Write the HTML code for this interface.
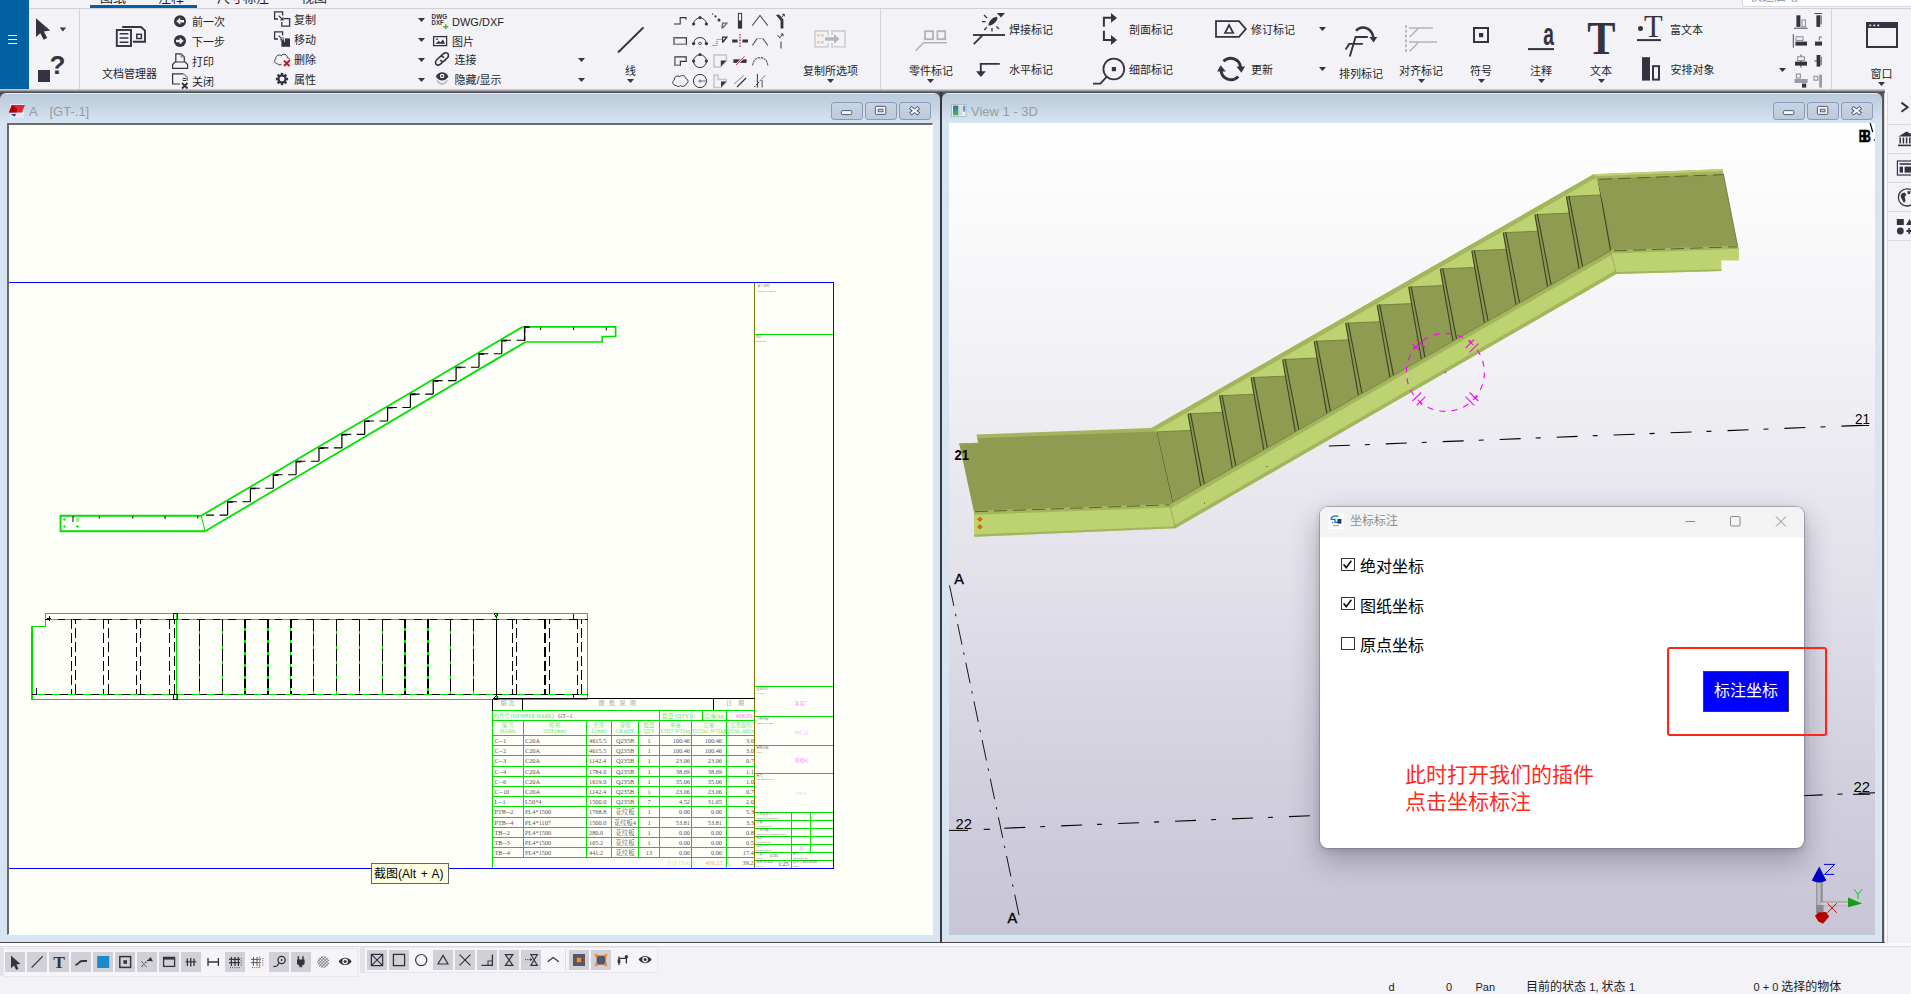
<!DOCTYPE html>
<html lang="zh-CN">
<head>
<meta charset="utf-8">
<title>Tekla Structures - 坐标标注</title>
<style>
*{box-sizing:border-box;margin:0;padding:0}
html,body{width:1911px;height:994px;overflow:hidden;background:#f3f2f7;}
body{position:relative;font-family:"Liberation Sans","Noto Sans CJK SC",sans-serif;font-size:11px;color:#1e1e28;}
.abs{position:absolute}
.t{position:absolute;white-space:nowrap;line-height:1}
svg{position:absolute;overflow:visible}
#ribbon{position:absolute;left:0;top:0;width:1911px;height:90px;background:#f3f2f7}
#bluebar{position:absolute;left:0;top:0;width:29px;height:90px;background:#0060a0}
.rsep{position:absolute;top:9px;width:1px;height:80px;background:#d4d3da}
.rt{position:absolute;white-space:nowrap;font-size:11px;line-height:12px;color:#1e1e28;letter-spacing:0}
.win{position:absolute;top:93px;height:849px;background:linear-gradient(#e4ecf6 0px,#e4ecf6 1px,#bccbdb 1.5px,#c6d5e4 14px,#d7e5f3 30px,#d7e5f3 100%);border-radius:6px 6px 0 0}
.wtitle{position:absolute;top:12px;font-size:13px;line-height:14px;color:#9a9aa0;white-space:pre}
.wbtn{position:absolute;top:9px;width:32px;height:18px;border:1px solid #8a9ab8;border-radius:3px;background:linear-gradient(#c6d4e3,#bccbdc)}
</style>
</head>
<body>
<div id="ribbon"></div>
<div id="bluebar"></div>
<!-- shadow under ribbon -->
<div class="abs" style="left:0;top:89px;width:1885px;height:4px;background:linear-gradient(#dcdce0,#a8a8ac 35%,#4a4a4e 80%,#4a4a4e)"></div>
<div class="abs" style="left:0;top:92px;width:1884px;height:10px;background:#505054"></div>
<!-- left window -->
<div class="win" id="winL" style="left:0;width:940px">
  <div class="wtitle" style="left:29px">A</div><div class="wtitle" style="left:49.5px">[GT-.1]</div>
  <div class="wbtn" style="left:831px"></div><div class="wbtn" style="left:865px"></div><div class="wbtn" style="left:899px"></div>
  <div class="abs" style="left:7px;top:30px;width:926px;height:812px;background:#fffffa;border-left:2px solid #6a6a68;border-top:2px solid #6a6a68;border-right:1px solid #fff;border-bottom:1px solid #fff"></div>
</div>
<div class="abs" style="left:940px;top:92px;width:2px;height:850px;background:#38383a"></div>
<!-- right window -->
<div class="win" id="winR" style="left:942px;width:940px">
  <div class="wtitle" style="left:29px">View 1 - 3D</div>
  <div class="wbtn" style="left:831px"></div><div class="wbtn" style="left:865px"></div><div class="wbtn" style="left:899px"></div>
  <div class="abs" id="view3d" style="left:7px;top:30px;width:926px;height:812px;background:linear-gradient(#ffffff 0%,#f4f4f7 25%,#e3e1ea 55%,#d2d0dd 80%,#c8c6d6 100%)"></div>
</div>
<div class="abs" style="left:1882px;top:93px;width:3px;height:850px;background:linear-gradient(90deg,#58585c 0,#58585c 50%,#c8c8cc 75%,#f8f8fa 100%)"></div>
<!-- right sidebar -->
<div class="abs" style="left:1885px;top:90px;width:26px;height:855px;background:#f3f2f7;border-left:2px solid #fbfbfd"></div><div class="abs" style="left:1887px;top:93px;width:1px;height:850px;background:#dad9e0"></div>
<!-- bottom -->
<div class="abs" style="left:0;top:941.6px;width:1885px;height:1.6px;background:#47474b"></div>
<div class="abs" style="left:0;top:944px;width:1911px;height:50px;background:#f3f2f7"></div>
<svg style="left:0;top:88px" width="1911" height="170" viewBox="0 88 1911 170" fill="none">
<rect x="10" y="104" width="14" height="14" fill="#e6e8f2"/><path d="M11.8 105.1H24.9L22.1 112.6H9Z" fill="#d62a34"/><path d="M11.8 105.1L17 108.6L16.6 112.6H9Z" fill="#b00008"/><path d="M10.8 113.9H16.1L14.6 116.7Z" fill="#0a4a9a"/>
<defs><linearGradient id="ti" x1="0" x2="0" y1="0" y2="1"><stop offset="0" stop-color="#2a7a9a"/><stop offset="1" stop-color="#5ab060"/></linearGradient></defs>
<rect x="951.6" y="104.4" width="14.4" height="12.2" fill="#eceef2" stroke="#aab4c4" stroke-width="0.8"/><rect x="953" y="105.6" width="5.4" height="9.8" fill="url(#ti)"/><rect x="959" y="105.6" width="3.4" height="9.8" fill="#d8dade"/><rect x="963" y="105.6" width="2.2" height="6" fill="#5a9ad0"/>
<rect x="841.4" y="110.6" width="10.4" height="4" rx="1" fill="#f4f4f6" stroke="#4a4a58" stroke-width="0.9"/>
<rect x="875.4" y="106.4" width="10.4" height="8" rx="1" fill="#f4f4f6" stroke="#4a4a58" stroke-width="0.9"/><rect x="878.2" y="109.2" width="4.8" height="2.6" fill="#c2d0e0" stroke="#4a4a58" stroke-width="0.8"/>
<path d="M910.3000000000001 107.4L918.9 114.0M918.9 107.4L910.3000000000001 114.0" stroke="#4a4a58" stroke-width="3.8"/><path d="M910.9 107.85000000000001L918.3000000000001 113.55M918.3000000000001 107.85000000000001L910.9 113.55" stroke="#f4f4f6" stroke-width="2.1"/>
<rect x="1783.4" y="110.6" width="10.4" height="4" rx="1" fill="#f4f4f6" stroke="#4a4a58" stroke-width="0.9"/>
<rect x="1817.4" y="106.4" width="10.4" height="8" rx="1" fill="#f4f4f6" stroke="#4a4a58" stroke-width="0.9"/><rect x="1820.2" y="109.2" width="4.8" height="2.6" fill="#c2d0e0" stroke="#4a4a58" stroke-width="0.8"/>
<path d="M1852.3 107.4L1860.8999999999999 114.0M1860.8999999999999 107.4L1852.3 114.0" stroke="#4a4a58" stroke-width="3.8"/><path d="M1852.8999999999999 107.85000000000001L1860.3 113.55M1860.3 107.85000000000001L1852.8999999999999 113.55" stroke="#f4f4f6" stroke-width="2.1"/>
<path d="M1901.4 102.6L1907.6 107.2L1901.4 111.8" stroke="#34333f" stroke-width="2"/>
<path d="M1888 124.5H1911" stroke="#dcdbe2" stroke-width="1"/>
<path d="M1888 153.5H1911" stroke="#dcdbe2" stroke-width="1"/>
<path d="M1888 182.5H1911" stroke="#dcdbe2" stroke-width="1"/>
<path d="M1888 211.5H1911" stroke="#dcdbe2" stroke-width="1"/>
<path d="M1888 240.5H1911" stroke="#dcdbe2" stroke-width="1"/>
<path d="M1898.4 136.4L1906.6 131.4L1914.8 136.4Z" fill="#34333f"/><path d="M1900.2 137.6V143.6M1903.4 137.6V143.6M1906.6 137.6V143.6M1909.8 137.6V143.6" stroke="#34333f" stroke-width="1.5"/><path d="M1898 145.4H1915" stroke="#34333f" stroke-width="1.6"/>
<rect x="1897.4" y="161" width="20" height="14" stroke="#34333f" stroke-width="1.2"/><path d="M1899.6 164H1915" stroke="#34333f" stroke-width="1.6"/><rect x="1899.6" y="166.6" width="3.4" height="6" fill="#34333f"/><rect x="1904.6" y="166.6" width="9" height="6" fill="#34333f"/>
<circle cx="1907" cy="197.4" r="8.6" stroke="#34333f" stroke-width="1.3"/><path d="M1901.6 193.6L1904.6 192.4L1906.4 194.6L1904.6 197L1905.6 200.4L1904 203L1902 199.6L1900.6 196.4Z" fill="#34333f"/><path d="M1907.6 191L1910.8 191.6L1909.6 194.2L1907.4 193.4Z" fill="#34333f"/>
<rect x="1896.8" y="219" width="7" height="6" fill="#34333f"/><path d="M1906 225L1909.6 219L1913 225Z" fill="#34333f"/><circle cx="1900.3" cy="231" r="3.4" fill="#34333f"/><path d="M1906.4 231H1912M1909.2 228V234" stroke="#34333f" stroke-width="1.8"/>
</svg>
<div id="ribboncontent">
<div class="abs" style="left:29px;top:8px;width:1882px;height:1px;background:#d0cfd6"></div>
<div class="abs" style="left:90px;top:5px;width:107px;height:3px;background:#0060a0"></div>
<div class="rt" style="left:100px;top:-9.4px;font-size:13px;line-height:14px">图纸</div>
<div class="rt" style="left:158px;top:-9.4px;font-size:13px;line-height:14px">注释</div>
<div class="rt" style="left:217px;top:-9.4px;font-size:13px;line-height:14px">尺寸标注</div>
<div class="rt" style="left:301px;top:-9.4px;font-size:13px;line-height:14px">视图</div>
<div class="abs" style="left:1742px;top:-12px;width:175px;height:19px;background:#fff;border:1px solid #dcdbe2"></div>
<div class="rt" style="left:1750px;top:-9px;color:#8a90b0;font-size:12px">快速启动</div>
<div class="rsep" style="left:79px"></div>
<div class="rsep" style="left:880px"></div>
<div class="rsep" style="left:1831px"></div>
<div class="rt" style="left:192px;top:15.5px;">前一次</div>
<div class="rt" style="left:192px;top:35.5px;">下一步</div>
<div class="rt" style="left:192px;top:56px;">打印</div>
<div class="rt" style="left:192px;top:76.3px;">关闭</div>
<div class="rt" style="left:102px;top:67.7px;">文档管理器</div>
<div class="rt" style="left:294px;top:14px;">复制</div>
<div class="rt" style="left:294px;top:34.2px;">移动</div>
<div class="rt" style="left:294px;top:54.3px;">删除</div>
<div class="rt" style="left:294px;top:74.4px;">属性</div>
<div class="rt" style="left:452px;top:15.8px;">DWG/DXF</div>
<div class="rt" style="left:452px;top:35.9px;">图片</div>
<div class="rt" style="left:454.5px;top:54.3px;">连接</div>
<div class="rt" style="left:454.5px;top:73.7px;">隐藏/显示</div>
<svg style="left:418.0px;top:18.0px" width="7" height="4" viewBox="0 0 7 4"><path d="M0 0H7L3.5 4Z" fill="#33323f"/></svg>
<svg style="left:418.0px;top:38.0px" width="7" height="4" viewBox="0 0 7 4"><path d="M0 0H7L3.5 4Z" fill="#33323f"/></svg>
<svg style="left:418.0px;top:58.0px" width="7" height="4" viewBox="0 0 7 4"><path d="M0 0H7L3.5 4Z" fill="#33323f"/></svg>
<svg style="left:418.0px;top:78.0px" width="7" height="4" viewBox="0 0 7 4"><path d="M0 0H7L3.5 4Z" fill="#33323f"/></svg>
<svg style="left:578.2px;top:57.6px" width="7" height="4" viewBox="0 0 7 4"><path d="M0 0H7L3.5 4Z" fill="#33323f"/></svg>
<svg style="left:578.2px;top:77.7px" width="7" height="4" viewBox="0 0 7 4"><path d="M0 0H7L3.5 4Z" fill="#33323f"/></svg>
<div class="rt" style="left:625px;top:65px;">线</div>
<svg style="left:627.0px;top:78.5px" width="7" height="4" viewBox="0 0 7 4"><path d="M0 0H7L3.5 4Z" fill="#33323f"/></svg>
<div class="rt" style="left:803px;top:65px;">复制所选项</div>
<svg style="left:827.0px;top:78.5px" width="7" height="4" viewBox="0 0 7 4"><path d="M0 0H7L3.5 4Z" fill="#33323f"/></svg>
<div class="rt" style="left:909px;top:65px;">零件标记</div>
<svg style="left:927.0px;top:78.5px" width="7" height="4" viewBox="0 0 7 4"><path d="M0 0H7L3.5 4Z" fill="#33323f"/></svg>
<div class="rt" style="left:1009px;top:24.1px;">焊接标记</div>
<div class="rt" style="left:1009px;top:64.3px;">水平标记</div>
<div class="rt" style="left:1129px;top:24.1px;">剖面标记</div>
<div class="rt" style="left:1129px;top:64.3px;">细部标记</div>
<div class="rt" style="left:1251px;top:23.8px;">修订标记</div>
<div class="rt" style="left:1251px;top:64px;">更新</div>
<svg style="left:1319.3px;top:27.4px" width="7" height="4" viewBox="0 0 7 4"><path d="M0 0H7L3.5 4Z" fill="#33323f"/></svg>
<svg style="left:1319.3px;top:67.2px" width="7" height="4" viewBox="0 0 7 4"><path d="M0 0H7L3.5 4Z" fill="#33323f"/></svg>
<div class="rt" style="left:1339px;top:67.7px;">排列标记</div>
<div class="rt" style="left:1399px;top:64.7px;">对齐标记</div>
<svg style="left:1417.5px;top:78.5px" width="7" height="4" viewBox="0 0 7 4"><path d="M0 0H7L3.5 4Z" fill="#33323f"/></svg>
<div class="rt" style="left:1470px;top:64.7px;">符号</div>
<svg style="left:1477.5px;top:78.5px" width="7" height="4" viewBox="0 0 7 4"><path d="M0 0H7L3.5 4Z" fill="#33323f"/></svg>
<div class="rt" style="left:1530px;top:64.7px;">注释</div>
<svg style="left:1537.5px;top:78.5px" width="7" height="4" viewBox="0 0 7 4"><path d="M0 0H7L3.5 4Z" fill="#33323f"/></svg>
<div class="rt" style="left:1590px;top:64.7px;">文本</div>
<svg style="left:1597.5px;top:78.5px" width="7" height="4" viewBox="0 0 7 4"><path d="M0 0H7L3.5 4Z" fill="#33323f"/></svg>
<div class="rt" style="left:1670px;top:23.8px;">富文本</div>
<div class="rt" style="left:1670.5px;top:64px;">安排对象</div>
<svg style="left:1778.7px;top:67.5px" width="7" height="4" viewBox="0 0 7 4"><path d="M0 0H7L3.5 4Z" fill="#33323f"/></svg>
<div class="rt" style="left:1870.5px;top:67.7px;">窗口</div>
<svg style="left:1878.0px;top:81.5px" width="7" height="4" viewBox="0 0 7 4"><path d="M0 0H7L3.5 4Z" fill="#33323f"/></svg>
</div>
<svg id="ribicons" style="left:0;top:0" width="1911" height="92" viewBox="0 0 1911 92" fill="none" stroke="none">
<g stroke="#fff" stroke-width="1.1"><path d="M8 35.5H17M8 39.5H17M8 43.5H17"/></g>
<path d="M36 18.3V37L40.3 33.2L43.6 39.8L47.2 38L43.9 31.6L50.2 30.6Z" fill="#34333f"/>
<path d="M59.7 27.6H66.1L62.9 31.4Z" fill="#34333f"/>
<text x="49.5" y="73.5" font-family="Liberation Sans,sans-serif" font-weight="bold" font-size="26" fill="#34333f">?</text>
<rect x="38" y="70" width="12" height="12" fill="#34333f"/>
<g stroke="#34333f" stroke-width="1.9"><rect x="116.8" y="30" width="14.2" height="16"/><path d="M122.2 27H141L145 30.6V41.7H133" /><path d="M119.6 33.8H128.4M119.6 38H128.4M119.6 42.2H128.4" stroke-width="1.5"/><rect x="136.8" y="34.3" width="4.6" height="4.2" stroke-width="1.5"/></g>
<circle cx="180" cy="21.2" r="6" fill="#34333f"/><path d="M176.3 21.2L180.3 17.6V20H184V22.4H180.3V24.8Z" fill="#f3f2f7"/>
<circle cx="180" cy="41" r="6" fill="#34333f"/><path d="M183.7 41L179.7 37.4V39.8H176V42.2H179.7V44.6Z" fill="#f3f2f7"/>
<g stroke="#34333f" stroke-width="1.2"><path d="M175.8 62V53.8H181L184.3 57V62"/><path d="M181 53.8V57H184.3" stroke="#8a8a94"/><path d="M172.6 68.3V64.5L175 62H185.2L187.6 64.5V68.3Z"/></g>
<g stroke="#34333f" stroke-width="1.2"><path d="M183.5 73.8H172.6V84H180" /><path d="M183.5 73.8L187.4 77.6V81" stroke="#8a8a94"/><path d="M182 83L187.5 88.5M187.5 83L182 88.5" stroke-width="1.8"/><rect x="183.3" y="78.5" width="2.6" height="2" stroke-width="1"/></g>
<g stroke="#34333f" stroke-width="1.3"><path d="M282.6 15.5V11.8H274.6V19H278"/><path d="M284 18.7H289.6V26.2H281.8V22"/><path d="M278.6 15.6L283 20M283 17.2V20H280.2" stroke-width="1.1"/></g>
<g stroke="#34333f" stroke-width="1.3"><path d="M282.6 35.5V31.8H274.6V39H278"/><path d="M278.6 35.6L283 40M283 37.2V40H280.2" stroke-width="1.1"/></g><rect x="281.4" y="38.4" width="8.6" height="8.4" fill="#34333f"/><path d="M281.4 38.4H285V42H281.4Z" fill="#f3f2f7"/><path d="M280.9 38.8L283.6 41.5M283.6 39.2V41.5H281.3" stroke="#34333f" stroke-width="1.1"/>
<path d="M277.5 63.8C274.5 63.5 273.6 60 276 58.6C275.6 55.5 279.3 54 281.2 55.8C283.3 53 287.6 54.5 287.3 57.6C290 58 290.6 61 288.6 62" stroke="#34333f" stroke-width="1"/><path d="M277.5 63.8C279 65.5 281 65 281.6 64" stroke="#34333f" stroke-width="1"/>
<path d="M284 60.6L289.4 66M289.4 60.6L284 66" stroke="#b01c24" stroke-width="2"/>
<rect x="280.75" y="72.9" width="2.5" height="3.2" transform="rotate(0 282 79)" fill="#34333f"/><rect x="280.75" y="72.9" width="2.5" height="3.2" transform="rotate(45 282 79)" fill="#34333f"/><rect x="280.75" y="72.9" width="2.5" height="3.2" transform="rotate(90 282 79)" fill="#34333f"/><rect x="280.75" y="72.9" width="2.5" height="3.2" transform="rotate(135 282 79)" fill="#34333f"/><rect x="280.75" y="72.9" width="2.5" height="3.2" transform="rotate(180 282 79)" fill="#34333f"/><rect x="280.75" y="72.9" width="2.5" height="3.2" transform="rotate(225 282 79)" fill="#34333f"/><rect x="280.75" y="72.9" width="2.5" height="3.2" transform="rotate(270 282 79)" fill="#34333f"/><rect x="280.75" y="72.9" width="2.5" height="3.2" transform="rotate(315 282 79)" fill="#34333f"/><circle cx="282" cy="79" r="3.55" stroke="#34333f" stroke-width="2.1"/>
<g font-family="Liberation Sans,sans-serif" font-weight="bold" font-size="7.6" fill="#34333f"><text x="431.6" y="18.6" textLength="15.6" lengthAdjust="spacingAndGlyphs">DWG</text><text x="431.6" y="25" textLength="12" lengthAdjust="spacingAndGlyphs">DXF</text></g>
<path d="M445.7 24.3V29.3M443.2 26.8H448.2" stroke="#5aa832" stroke-width="1.5"/>
<rect x="433.6" y="36.6" width="13" height="9" stroke="#34333f" stroke-width="1.3"/><path d="M435.6 43.8L438.6 40.8L440.4 42.4L443 39.4L445 43.8Z" fill="#34333f"/><circle cx="437" cy="39.2" r="0.9" fill="#34333f"/>
<g stroke="#34333f" stroke-width="1.6" stroke-linecap="round"><path d="M440.8 56.3L443.2 53.9C445 52.1 447.8 52.3 448.4 54.6C448.8 56 448.2 57 447.4 57.8L444.6 60.6C443.2 62 441.4 61.6 440.6 60.6"/><path d="M443.2 61.5L440.8 63.9C439 65.7 436.2 65.5 435.6 63.2C435.2 61.8 435.8 60.8 436.6 60L439.4 57.2C440.8 55.8 442.6 56.2 443.4 57.2"/></g>
<path d="M435.8 76.4C439 71 445.2 71 448.4 76.4C445.2 81.8 439 81.8 435.8 76.4Z" fill="#34333f"/><circle cx="442.1" cy="76" r="2.3" fill="#f3f2f7"/><circle cx="442.1" cy="76" r="1" fill="#34333f"/>
<path d="M436.2 80.6C439.5 86.3 444.7 86.3 448 80.6L446.6 80C444 84 440.2 84 437.6 80Z" fill="#b8b8c0"/>
<path d="M618 52.5L643.5 27.4" stroke="#34333f" stroke-width="2"/>
<g stroke="#34333f" stroke-width="1.1"><path d="M674 24H680.2V17.6H686V19.8"/><path d="M674 24H680.2" stroke="#8a8a94"/></g>
<path d="M693.5 23.8C694.5 16 705.5 16 706.5 23.8" stroke="#34333f" stroke-width="1"/><g fill="#34333f"><circle cx="693.6" cy="24" r="1.6"/><circle cx="700" cy="17.6" r="1.5"/><circle cx="706.4" cy="24" r="1.6"/></g>
<g fill="#34333f"><circle cx="712.8" cy="14" r="0.7"/><circle cx="715.5" cy="16.4" r="1.1"/><circle cx="719" cy="20" r="1.5"/></g><path d="M722 22.6H728.2L723.2 28.6H721.2Z" fill="#6a6a76"/><path d="M723.2 23.8H725.4L723.2 26.4Z" fill="#f3f2f7"/>
<rect x="738.4" y="13.4" width="3.2" height="7.6" stroke="#34333f" stroke-width="1"/><rect x="737.9" y="21" width="4.2" height="7.6" fill="#34333f"/>
<path d="M752.3 25.7L760 15.4L767.8 25.7" stroke="#55545f" stroke-width="1.1"/>
<path d="M776 15L780.6 20.5V28.6H783.4V19.4L779 14.4Z" fill="#34333f"/><path d="M781.6 17.4L784 14.6M782.2 14.3H784.3V16.4" stroke="#34333f" stroke-width="1"/>
<rect x="674" y="37.8" width="12.4" height="6.6" stroke="#34333f" stroke-width="1.2"/><path d="M674 37.8V44.4H686.4" stroke="#8a8a94" stroke-width="1.2"/>
<path d="M693.5 43.2C695 35.6 705 35.6 706.5 43.2" stroke="#34333f" stroke-width="1"/><g fill="#34333f"><circle cx="693.6" cy="43.6" r="1.6"/><circle cx="706.4" cy="43.6" r="1.6"/></g><ellipse cx="700" cy="43.4" rx="1.5" ry="1.1" stroke="#34333f" stroke-width="0.8"/>
<g stroke="#8a8a94" stroke-width="0.8"><path d="M712 45.4H717.6M715.6 43.4H718M716 41.4H718M716.4 39.4H722"/></g><path d="M722 36.6H728.2L723.4 42.8H722Z" fill="#34333f"/><path d="M723.2 37.8H725.4L723.2 40.6Z" fill="#f3f2f7"/>
<path d="M732.2 40.9H737.6M742.4 40.9H748" stroke="#34333f" stroke-width="3"/><path d="M740 34V48" stroke="#d04848" stroke-width="1.5" stroke-dasharray="1.6 1.2"/>
<path d="M752.3 45.5L757 38.6" stroke="#55545f" stroke-width="1.1"/><path d="M763 38.6L767.8 45.5" stroke="#55545f" stroke-width="1.1"/><path d="M757 38.6H763" stroke="#a8a8b0" stroke-width="1.1"/>
<path d="M781 41.5V48.6" stroke="#7a7a84" stroke-width="1.6"/><path d="M777.4 35L780.6 38.4" stroke="#34333f" stroke-width="1"/><path d="M780 37.4L782.6 34.4M780.8 34H783V36.2" stroke="#34333f" stroke-width="1"/>
<path d="M674.8 56.8H686.2V61.4H680.4V65.4H674.8Z" stroke="#34333f" stroke-width="1.2"/><path d="M674.8 56.8V65.4H680.4" stroke="#8a8a94" stroke-width="1.2"/>
<circle cx="700" cy="61.2" r="6.4" stroke="#34333f" stroke-width="1"/><g fill="#34333f"><circle cx="700" cy="54.6" r="1.5"/><circle cx="693.6" cy="61" r="1.6"/><circle cx="706.4" cy="61" r="1.6"/></g>
<path d="M714 55H726.4V61L720.6 67H714Z" stroke="#c4c4cc" stroke-width="1.5"/><path d="M726.4 60.6H720.8V66.6Z" fill="#34333f"/>
<path d="M733.4 59.3H746.6V62.9H733.4Z" fill="#34333f"/><path d="M736 65.2L744.4 56.4" stroke="#f3f2f7" stroke-width="2.2"/><path d="M736 65.2L744.4 56.4" stroke="#c02830" stroke-width="1"/>
<path d="M752.6 65.4C753.6 55 766.8 55 767.8 65.4" stroke="#55545f" stroke-width="1.1" stroke-dasharray="2.4 0.7"/>
<path d="M676.4 85.6C672.6 85.6 671.4 81.6 674.4 80C673.8 76.6 677.6 75 679.8 76.6C682 74.6 685.6 75.6 685.6 78.4C688.6 79 688.8 83 686 84C685.4 86.6 681.6 87 680.4 85.6C679.4 86.8 677.2 86.8 676.4 85.6Z" stroke="#34333f" stroke-width="1"/>
<circle cx="700" cy="81" r="6.6" stroke="#34333f" stroke-width="1"/><circle cx="700" cy="81" r="1.6" fill="#8a8a94"/><path d="M700 81H706.6" stroke="#8a8a94" stroke-width="1.2"/>
<path d="M714 75H718V79.6H726.4V82L721 87.6H714Z" stroke="#c4c4cc" stroke-width="1.5"/><path d="M726.4 81.4H721V87.2Z" fill="#34333f"/>
<path d="M734 84L744 75.4" stroke="#8a8a94" stroke-width="1"/><path d="M737 87L746 78" stroke="#34333f" stroke-width="1.2"/>
<path d="M757.4 74V87.6" stroke="#34333f" stroke-width="1"/><path d="M762.2 80V87.6" stroke="#8a8a94" stroke-width="1.6"/><path d="M754.4 87L765 75.4" stroke="#34333f" stroke-width="1" stroke-dasharray="1.6 1.2"/>
<g stroke="#d2d2d8" stroke-width="1.8"><path d="M828 35V31H815V46.8H828V43"/><path d="M832 35V31H845V46.8H832V43"/></g><g fill="#f6c795"><rect x="817.2" y="34" width="2.6" height="2.6"/><rect x="821" y="34" width="2.6" height="2.6"/><rect x="817.2" y="41" width="2.6" height="2.6"/><rect x="821" y="41" width="2.6" height="2.6"/></g><path d="M825 37.2H834V34L839.4 39L834 44V40.8H825Z" fill="#b6b6be"/>
<g stroke="#b2b2ba"><rect x="925" y="31.2" width="8" height="8" stroke-width="1.8"/><rect x="937.4" y="31.2" width="7.8" height="8" stroke-width="1.8"/><path d="M915.8 50.6L923.6 42.8H947" stroke-width="1.5"/></g>
<g stroke="#34333f"><path d="M973 35H1005" stroke-width="1.9"/><path d="M973.8 44.2L982.4 35.4" stroke-width="1.9"/><path d="M992 28V31.6M984 15L987 18M982 21.6H985.6M984.2 30L986.8 27.2M996.4 26.4L999 29" stroke-width="1.3"/></g><path d="M988.4 25.6C988.4 22 992 17.4 996.4 16.8C997.6 17.2 997.6 18.6 997.2 19.6C995.6 23 992 25.8 988.4 25.6Z" fill="#34333f"/><path d="M996.8 13H1005L1001 17.6Z" fill="#34333f"/>
<path d="M999.8 63.9H980.8V72" stroke="#34333f" stroke-width="1.9"/><path d="M976 71.2H985.8L980.9 76.9Z" fill="#34333f"/>
<g stroke="#34333f" stroke-width="2"><path d="M1103.9 26.8V17.8H1111.4"/><path d="M1103.9 30.8V40H1111.4"/></g><path d="M1111 13V22.8L1117 17.9Z" fill="#34333f"/><path d="M1111 35.1V44.9L1117 40Z" fill="#34333f"/>
<circle cx="1113.8" cy="69" r="10.4" stroke="#34333f" stroke-width="1.8"/><rect x="1111.8" y="67" width="4.2" height="4.2" fill="#34333f"/><path d="M1106.8 76.6L1100.4 83.7H1093" stroke="#34333f" stroke-width="1.8"/>
<path d="M1216 21.2H1239L1245.8 29L1239 36.8H1216Z" stroke="#34333f" stroke-width="1.8"/><path d="M1229.1 25L1225 33H1233.2Z" stroke="#34333f" stroke-width="1.7"/>
<g stroke="#34333f" stroke-width="2.9"><path d="M1223.5 61.3A10 10 0 0 1 1240.6 67.6"/><path d="M1238.3 76.6A10 10 0 0 1 1221.1 70.3"/></g><path d="M1236.4 66.6H1245L1241.4 72.8Z" fill="#34333f"/><path d="M1217.2 71.4H1225.8L1220.6 65.2Z" fill="#34333f"/>
<path d="M1356 30.8C1360 25.6 1370.6 25.6 1373.4 37" stroke="#34333f" stroke-width="2.5"/><path d="M1369.4 37H1377.3L1373.6 42.4Z" fill="#34333f"/><g stroke="#34333f" stroke-width="1.9"><path d="M1367.8 37H1355.6L1349.8 56.5"/><path d="M1362.8 43.9H1349.2L1345.6 49.6"/></g>
<g stroke="#b4b4bc"><path d="M1406 25V52.8" stroke-width="1.8" stroke-dasharray="3 1.8"/><path d="M1409 28H1433M1418.8 28L1409.6 37" stroke-width="1.5"/><path d="M1409 42H1437M1418.8 42L1409.6 51.4" stroke-width="1.5"/></g>
<rect x="1474" y="28" width="14" height="14" stroke="#34333f" stroke-width="2"/><rect x="1479" y="33" width="4.2" height="4.2" fill="#34333f"/>
<text transform="translate(1543.2 44.7) scale(0.6 1)" font-family="Liberation Sans,sans-serif" font-weight="bold" font-size="32" fill="#34333f">a</text><rect x="1528" y="48.1" width="26" height="2" fill="#34333f"/>
<text transform="translate(1587.2 54) scale(0.93 1)" font-family="Liberation Serif,serif" font-weight="bold" font-size="45.5" fill="#34333f">T</text>
<text x="1644" y="37.4" font-family="Liberation Serif,serif" font-size="30.5" fill="#34333f">T</text><circle cx="1640.5" cy="28.5" r="2.5" fill="#34333f"/><rect x="1637" y="39.1" width="24" height="2" fill="#34333f"/>
<rect x="1642" y="57.2" width="8" height="23.4" fill="#34333f"/><rect x="1653" y="66.2" width="6" height="13.4" stroke="#34333f" stroke-width="2"/>
<rect x="1796.4" y="15.3" width="4" height="11.6" fill="#34333f"/><rect x="1802" y="20" width="3.4" height="6.6" stroke="#8a8a94" stroke-width="1"/><path d="M1794 28.2H1807.6" stroke="#34333f" stroke-width="0.9"/>
<path d="M1814.4 13.5H1822" stroke="#34333f" stroke-width="0.9"/><rect x="1816.4" y="15.3" width="3.8" height="11.6" fill="#34333f"/><rect x="1820.2" y="15.3" width="1.8" height="9" fill="#8a8a94"/>
<path d="M1793.3 34.2V47.7" stroke="#34333f" stroke-width="0.9"/><rect x="1796" y="36.8" width="7" height="3.6" stroke="#8a8a94" stroke-width="1"/><rect x="1795.4" y="41.6" width="11.6" height="4" fill="#34333f"/>
<rect x="1815" y="41.6" width="7" height="4" fill="#34333f"/><path d="M1822 37H1819.4V40.4" stroke="#6a6a74" stroke-width="1"/>
<path d="M1801 54.5V67.6" stroke="#34333f" stroke-width="0.9"/><rect x="1797.6" y="56.8" width="6.8" height="3.6" stroke="#8a8a94" stroke-width="1" fill="#f3f2f7"/><rect x="1795" y="61.6" width="12" height="4" fill="#34333f"/>
<rect x="1816.6" y="55" width="3.8" height="11.6" fill="#34333f"/><path d="M1814.4 61H1822" stroke="#34333f" stroke-width="0.9"/><rect x="1820.4" y="57" width="1.6" height="8" fill="#8a8a94"/>
<rect x="1796.4" y="74" width="4" height="4" stroke="#9a9aa2" stroke-width="1.2"/><rect x="1794.6" y="79" width="13" height="4" fill="#9a9aa2"/><rect x="1802" y="83.6" width="4.2" height="4" fill="#34333f"/>
<rect x="1814" y="76.4" width="3.8" height="3.8" stroke="#9a9aa2" stroke-width="1.2"/><rect x="1819.2" y="74.6" width="2.8" height="13" fill="#9a9aa2"/>
<rect x="1867" y="23" width="30" height="24" stroke="#34333f" stroke-width="2"/><rect x="1867" y="23" width="30" height="5" fill="#34333f"/><g fill="#f3f2f7"><rect x="1869.4" y="24.6" width="1.8" height="1.6"/><rect x="1873.4" y="24.6" width="1.8" height="1.6"/><rect x="1877.4" y="24.6" width="1.8" height="1.6"/></g>
</svg>
<svg id="drawing" style="left:0;top:0" width="940" height="940" viewBox="0 0 940 940" fill="none" shape-rendering="auto">
<defs><clipPath id="cvL"><rect x="9" y="125" width="923" height="809"/></clipPath><clipPath id="tbl"><rect x="492" y="698" width="262" height="171"/></clipPath></defs><g clip-path="url(#cvL)">
<path d="M9 282.5H833.5V868.5H9" stroke="#0000ff" stroke-width="1.2" shape-rendering="crispEdges"/>
<path d="M754.5 283V868" stroke="#807000" stroke-width="1.2" shape-rendering="crispEdges"/>
<g stroke="#00e000" stroke-width="1.3" stroke-linejoin="miter">
<path d="M201.3 515.7H60.5V531.2H205.1" stroke-width="1.9"/>
<path d="M205.1 531.2L201.3 515.7" stroke-width="1"/>
<path d="M201.3 515.7L522.6 326.9" stroke-width="1.8"/>
<path d="M205.1 531.2L525.5 342" stroke-width="1.8"/>
<path d="M522.6 326.9H615.6V336.5H602.2V342H525.5" stroke-width="1.7"/>
</g>
<path d="M227.6 515.1V501.7M250.4 501.7V488.2M273.3 488.2V474.8M296.1 474.8V461.3M319.0 461.3V447.9M341.9 447.9V434.4M364.7 434.4V421.0M387.6 421.0V407.5M410.4 407.5V394.1M433.2 394.1V380.6M456.1 380.6V367.2M479.0 367.2V353.7M501.8 353.7V340.3M524.6 340.2V326.8" stroke="#000" stroke-width="1.2"/>
<path d="M227.6 515.1H201.3M250.4 501.7H227.6M273.3 488.2H250.4M296.1 474.8H273.3M319.0 461.3H296.1M341.9 447.9H319.0M364.7 434.4H341.9M387.6 421.0H364.7M410.4 407.5H387.6M433.2 394.1H410.4M456.1 380.6H433.2M479.0 367.2H456.1M501.8 353.7H479.0M524.6 340.2H501.8" stroke="#000" stroke-width="1.1" stroke-dasharray="8 5.5"/>
<path d="M227.2 502.0h5.5M250.0 488.5h5.5M272.9 475.1h5.5M295.8 461.6h5.5M318.6 448.2h5.5M341.5 434.7h5.5M364.3 421.3h5.5M387.2 407.8h5.5M410.0 394.4h5.5M432.9 380.9h5.5M455.7 367.5h5.5M478.6 354.0h5.5M501.4 340.6h5.5M524.2 327.1h5.5" stroke="#000" stroke-width="1.6"/>
<path d="M524.6 328V341" stroke="#000" stroke-width="1.4" stroke-dasharray="5 3"/>
<path d="M73 516v6M99.3 516v2.5M132.8 516v2.5M165 516v3M197.8 516v2.5M540.6 327.5v2.5M573.6 327.5v2.5M606.3 327.5v3" stroke="#000" stroke-width="1"/>
<path d="M62.8 519.6h3M64.3 518v3M62.8 526.4h3M64.3 525v3M76 519h3M76 521h3M77.5 525v3M76 526.5h3" stroke="#00e000" stroke-width="0.8"/>
<g stroke="#00e000" stroke-width="1.2" shape-rendering="crispEdges">
<path d="M587.6 613.3H45.2V626.5H32.1V699.4H587.6Z"/>
<path d="M176.5 613.3V699.4M496.3 613.3V699.4"/>
<path d="M45.2 619.2H587.6M32.1 694.2H587.6" stroke-width="1"/>
<path d="M199.3 619.2V694.2M222.2 619.2V694.2M245.0 619.2V694.2M267.9 619.2V694.2M290.7 619.2V694.2M313.6 619.2V694.2M336.5 619.2V694.2M359.3 619.2V694.2M382.2 619.2V694.2M405.0 619.2V694.2M427.9 619.2V694.2M450.8 619.2V694.2M473.6 619.2V694.2" stroke-width="1.2"/>
</g>
<g stroke="#000" stroke-width="1.1" shape-rendering="crispEdges">
<path d="M45.2 619.2H587.6M32.1 694.2H587.6" stroke-dasharray="7.5 8" stroke-dashoffset="3"/>
<path d="M199.3 619.2V694.2M222.2 619.2V694.2M313.6 619.2V694.2M336.5 619.2V694.2M359.3 619.2V694.2M382.2 619.2V694.2M450.8 619.2V694.2M473.6 619.2V694.2" stroke-dasharray="12 3" stroke-width="1.2"/>
<path d="M245.0 619.2V694.2M267.9 619.2V694.2M290.7 619.2V694.2M405.0 619.2V694.2M427.9 619.2V694.2" stroke-dasharray="9 3" stroke-width="1.9"/>
<path d="M71.5 619.2V694.2M103.6 619.2V694.2M136.6 619.2V694.2M169.8 619.2V694.2M512.3 619.2V694.2M545.0 619.2V694.2M577.7 619.2V694.2" stroke-dasharray="10 4" stroke-width="1.1"/>
<path d="M75.9 619.2V694.2M108.5 619.2V694.2M140.6 619.2V694.2M174.2 619.2V694.2M516.4 619.2V694.2M549.4 619.2V694.2M581.8 619.2V694.2" stroke-dasharray="10 4" stroke-dashoffset="5" stroke-width="1.1"/>
<path d="M496.3 619.2V694.2" stroke-width="1.2"/>
<path d="M173.2 613.8h4.4v5.6h-4.4zM173.2 694.6h4.4v4.8h-4.4zM573.6 613.6v5.6M573.6 694.4v5M494.2 613.6h4.2l-2.1 4zM494.2 699l2.1-4l2.1 4zM49 616v5M47 618.6h4M36.4 688v6" stroke-width="0.9"/>
</g>
<g stroke="#00e000" stroke-width="1.1" shape-rendering="crispEdges">
<path d="M755 334.5H833M755 686.5H833M755 716.5H833M755 745.5H833M755 773.5H833M755 812.5H833M755 820.5H833M755 828.5H833M755 836.5H833M755 844.5H833M755 852.5H833M755 860.5H833"/>
<path d="M791.6 812.3V868M810.3 812.3V852.4"/>
</g>
<path d="M492.5 698.6H754.5M492.5 698.6V710.6M522.6 698.6V710.6M713.6 698.6V710.6" stroke="#000" stroke-width="1.2" shape-rendering="crispEdges"/>
<g stroke="#00e000" stroke-width="1.15" shape-rendering="crispEdges">
<path d="M492.5 710.6H754.5M492.5 720.4H754.5M492.5 735.5H754.5M492.5 745.5H754.5M492.5 755.5H754.5M492.5 766.5H754.5M492.5 776.5H754.5M492.5 786.5H754.5M492.5 796.5H754.5M492.5 806.5H754.5M492.5 817.5H754.5M492.5 827.5H754.5M492.5 837.5H754.5M492.5 847.5H754.5M492.5 857.5H754.5"/>
<path d="M492.5 710.6V868M659.4 710.6V857.7M702.5 710.6V720.4M726.5 710.6V868M691.4 720.4V868M523.1 720.4V857.7M586.4 720.4V857.7M611.8 720.4V857.7M638.4 720.4V857.7"/>
</g>
<g font-family="Liberation Serif,Noto Serif CJK SC,serif"><g clip-path="url(#tbl)">
<text x="507.5" y="705.3" font-size="6" fill="#555" text-anchor="middle" opacity="0.7" >版 次</text>
<text x="618" y="705.3" font-size="6" fill="#555" text-anchor="middle" opacity="0.7" letter-spacing="1.5">图 纸 说 明</text>
<text x="735" y="705.3" font-size="6" fill="#555" text-anchor="middle" opacity="0.7" >日　期</text>
<text x="494" y="717.6" font-size="5.8" fill="#2fdc2f" text-anchor="start" opacity="0.8" textLength="61" lengthAdjust="spacingAndGlyphs">构件号 (MEMBER MARK):</text>
<text x="558" y="717.6" font-size="6" fill="#444" text-anchor="start" opacity="0.85" >GT--1</text>
<text x="662" y="717.6" font-size="5.8" fill="#2fdc2f" text-anchor="start" opacity="0.8" >数量 (QTY)1:</text>
<text x="704.5" y="717.6" font-size="5.8" fill="#2fdc2f" text-anchor="start" opacity="0.8" >总重(kg</text>
<text x="752" y="717.6" font-size="6" fill="#ff40ff" text-anchor="end" opacity="0.8" >406.25</text>
<text x="507.8" y="726.8" font-size="5.4" fill="#2fdc2f" text-anchor="middle" opacity="0.75" >编 号</text>
<text x="507.8" y="733.4" font-size="5.4" fill="#2fdc2f" text-anchor="middle" opacity="0.75" >MARK</text>
<text x="554.7" y="726.8" font-size="5.4" fill="#2fdc2f" text-anchor="middle" opacity="0.75" >规 格</text>
<text x="554.7" y="733.4" font-size="5.4" fill="#2fdc2f" text-anchor="middle" opacity="0.75" >SIZE(mm)</text>
<text x="599" y="726.8" font-size="5.4" fill="#2fdc2f" text-anchor="middle" opacity="0.75" >长度</text>
<text x="599" y="733.4" font-size="5.4" fill="#2fdc2f" text-anchor="middle" opacity="0.75" >L(mm)</text>
<text x="625" y="726.8" font-size="5.4" fill="#2fdc2f" text-anchor="middle" opacity="0.75" >等级</text>
<text x="625" y="733.4" font-size="5.4" fill="#2fdc2f" text-anchor="middle" opacity="0.75" >GRADE</text>
<text x="649" y="726.8" font-size="5.4" fill="#2fdc2f" text-anchor="middle" opacity="0.75" >数量</text>
<text x="649" y="733.4" font-size="5.4" fill="#2fdc2f" text-anchor="middle" opacity="0.75" >QTY</text>
<text x="675.5" y="726.8" font-size="5.4" fill="#2fdc2f" text-anchor="middle" opacity="0.75" >单重</text>
<text x="675.5" y="733.4" font-size="5.4" fill="#2fdc2f" text-anchor="middle" opacity="0.75" >UNIT WT(kg</text>
<text x="709" y="726.8" font-size="5.4" fill="#2fdc2f" text-anchor="middle" opacity="0.75" >总重</text>
<text x="709" y="733.4" font-size="5.4" fill="#2fdc2f" text-anchor="middle" opacity="0.75" >TOTAL WT(kg</text>
<text x="741" y="726.8" font-size="5.4" fill="#2fdc2f" text-anchor="middle" opacity="0.75" >总表面积</text>
<text x="741" y="733.4" font-size="5.4" fill="#2fdc2f" text-anchor="middle" opacity="0.75" >TOTAL AR(m  )</text>
<text x="494.5" y="742.8" font-size="6.3" fill="#333" text-anchor="start" opacity="0.85" >C--1</text>
<text x="525" y="742.8" font-size="6.3" fill="#333" text-anchor="start" opacity="0.85" >C20A</text>
<text x="589" y="742.8" font-size="6.3" fill="#333" text-anchor="start" opacity="0.85" >4615.5</text>
<text x="625" y="742.8" font-size="6.3" fill="#333" text-anchor="middle" opacity="0.85" >Q235B</text>
<text x="649" y="742.8" font-size="6.3" fill="#333" text-anchor="middle" opacity="0.85" >1</text>
<text x="690" y="742.8" font-size="6.3" fill="#333" text-anchor="end" opacity="0.85" >100.46</text>
<text x="722" y="742.8" font-size="6.3" fill="#333" text-anchor="end" opacity="0.85" >100.46</text>
<text x="757" y="742.8" font-size="6.3" fill="#333" text-anchor="end" opacity="0.85" >3.02</text>
<text x="494.5" y="752.8" font-size="6.3" fill="#333" text-anchor="start" opacity="0.85" >C--2</text>
<text x="525" y="752.8" font-size="6.3" fill="#333" text-anchor="start" opacity="0.85" >C20A</text>
<text x="589" y="752.8" font-size="6.3" fill="#333" text-anchor="start" opacity="0.85" >4615.5</text>
<text x="625" y="752.8" font-size="6.3" fill="#333" text-anchor="middle" opacity="0.85" >Q235B</text>
<text x="649" y="752.8" font-size="6.3" fill="#333" text-anchor="middle" opacity="0.85" >1</text>
<text x="690" y="752.8" font-size="6.3" fill="#333" text-anchor="end" opacity="0.85" >100.46</text>
<text x="722" y="752.8" font-size="6.3" fill="#333" text-anchor="end" opacity="0.85" >100.46</text>
<text x="757" y="752.8" font-size="6.3" fill="#333" text-anchor="end" opacity="0.85" >3.02</text>
<text x="494.5" y="762.8" font-size="6.3" fill="#333" text-anchor="start" opacity="0.85" >C--3</text>
<text x="525" y="762.8" font-size="6.3" fill="#333" text-anchor="start" opacity="0.85" >C20A</text>
<text x="589" y="762.8" font-size="6.3" fill="#333" text-anchor="start" opacity="0.85" >1142.4</text>
<text x="625" y="762.8" font-size="6.3" fill="#333" text-anchor="middle" opacity="0.85" >Q235B</text>
<text x="649" y="762.8" font-size="6.3" fill="#333" text-anchor="middle" opacity="0.85" >1</text>
<text x="690" y="762.8" font-size="6.3" fill="#333" text-anchor="end" opacity="0.85" >23.06</text>
<text x="722" y="762.8" font-size="6.3" fill="#333" text-anchor="end" opacity="0.85" >23.06</text>
<text x="757" y="762.8" font-size="6.3" fill="#333" text-anchor="end" opacity="0.85" >0.75</text>
<text x="494.5" y="773.8" font-size="6.3" fill="#333" text-anchor="start" opacity="0.85" >C--4</text>
<text x="525" y="773.8" font-size="6.3" fill="#333" text-anchor="start" opacity="0.85" >C20A</text>
<text x="589" y="773.8" font-size="6.3" fill="#333" text-anchor="start" opacity="0.85" >1784.0</text>
<text x="625" y="773.8" font-size="6.3" fill="#333" text-anchor="middle" opacity="0.85" >Q235B</text>
<text x="649" y="773.8" font-size="6.3" fill="#333" text-anchor="middle" opacity="0.85" >1</text>
<text x="690" y="773.8" font-size="6.3" fill="#333" text-anchor="end" opacity="0.85" >38.69</text>
<text x="722" y="773.8" font-size="6.3" fill="#333" text-anchor="end" opacity="0.85" >38.69</text>
<text x="757" y="773.8" font-size="6.3" fill="#333" text-anchor="end" opacity="0.85" >1.17</text>
<text x="494.5" y="783.8" font-size="6.3" fill="#333" text-anchor="start" opacity="0.85" >C--6</text>
<text x="525" y="783.8" font-size="6.3" fill="#333" text-anchor="start" opacity="0.85" >C20A</text>
<text x="589" y="783.8" font-size="6.3" fill="#333" text-anchor="start" opacity="0.85" >1619.0</text>
<text x="625" y="783.8" font-size="6.3" fill="#333" text-anchor="middle" opacity="0.85" >Q235B</text>
<text x="649" y="783.8" font-size="6.3" fill="#333" text-anchor="middle" opacity="0.85" >1</text>
<text x="690" y="783.8" font-size="6.3" fill="#333" text-anchor="end" opacity="0.85" >35.06</text>
<text x="722" y="783.8" font-size="6.3" fill="#333" text-anchor="end" opacity="0.85" >35.06</text>
<text x="757" y="783.8" font-size="6.3" fill="#333" text-anchor="end" opacity="0.85" >1.06</text>
<text x="494.5" y="793.8" font-size="6.3" fill="#333" text-anchor="start" opacity="0.85" >C--10</text>
<text x="525" y="793.8" font-size="6.3" fill="#333" text-anchor="start" opacity="0.85" >C20A</text>
<text x="589" y="793.8" font-size="6.3" fill="#333" text-anchor="start" opacity="0.85" >1142.4</text>
<text x="625" y="793.8" font-size="6.3" fill="#333" text-anchor="middle" opacity="0.85" >Q235B</text>
<text x="649" y="793.8" font-size="6.3" fill="#333" text-anchor="middle" opacity="0.85" >1</text>
<text x="690" y="793.8" font-size="6.3" fill="#333" text-anchor="end" opacity="0.85" >23.06</text>
<text x="722" y="793.8" font-size="6.3" fill="#333" text-anchor="end" opacity="0.85" >23.06</text>
<text x="757" y="793.8" font-size="6.3" fill="#333" text-anchor="end" opacity="0.85" >0.75</text>
<text x="494.5" y="803.8" font-size="6.3" fill="#333" text-anchor="start" opacity="0.85" >L--1</text>
<text x="525" y="803.8" font-size="6.3" fill="#333" text-anchor="start" opacity="0.85" >L50*4</text>
<text x="589" y="803.8" font-size="6.3" fill="#333" text-anchor="start" opacity="0.85" >1500.0</text>
<text x="625" y="803.8" font-size="6.3" fill="#333" text-anchor="middle" opacity="0.85" >Q235B</text>
<text x="649" y="803.8" font-size="6.3" fill="#333" text-anchor="middle" opacity="0.85" >7</text>
<text x="690" y="803.8" font-size="6.3" fill="#333" text-anchor="end" opacity="0.85" >4.52</text>
<text x="722" y="803.8" font-size="6.3" fill="#333" text-anchor="end" opacity="0.85" >31.65</text>
<text x="757" y="803.8" font-size="6.3" fill="#333" text-anchor="end" opacity="0.85" >2.07</text>
<text x="494.5" y="813.8" font-size="6.3" fill="#333" text-anchor="start" opacity="0.85" >PTB--2</text>
<text x="525" y="813.8" font-size="6.3" fill="#333" text-anchor="start" opacity="0.85" >PL4*1500</text>
<text x="589" y="813.8" font-size="6.3" fill="#333" text-anchor="start" opacity="0.85" >1768.8</text>
<text x="625" y="813.8" font-size="6.3" fill="#333" text-anchor="middle" opacity="0.85" >花纹板</text>
<text x="649" y="813.8" font-size="6.3" fill="#333" text-anchor="middle" opacity="0.85" >1</text>
<text x="690" y="813.8" font-size="6.3" fill="#333" text-anchor="end" opacity="0.85" >0.00</text>
<text x="722" y="813.8" font-size="6.3" fill="#333" text-anchor="end" opacity="0.85" >0.00</text>
<text x="757" y="813.8" font-size="6.3" fill="#333" text-anchor="end" opacity="0.85" >5.30</text>
<text x="494.5" y="824.8" font-size="6.3" fill="#333" text-anchor="start" opacity="0.85" >PTB--4</text>
<text x="525" y="824.8" font-size="6.3" fill="#333" text-anchor="start" opacity="0.85" >PL4*1107</text>
<text x="589" y="824.8" font-size="6.3" fill="#333" text-anchor="start" opacity="0.85" >1500.0</text>
<text x="625" y="824.8" font-size="6.3" fill="#333" text-anchor="middle" opacity="0.85" >花纹板4</text>
<text x="649" y="824.8" font-size="6.3" fill="#333" text-anchor="middle" opacity="0.85" >1</text>
<text x="690" y="824.8" font-size="6.3" fill="#333" text-anchor="end" opacity="0.85" >53.81</text>
<text x="722" y="824.8" font-size="6.3" fill="#333" text-anchor="end" opacity="0.85" >53.81</text>
<text x="757" y="824.8" font-size="6.3" fill="#333" text-anchor="end" opacity="0.85" >3.34</text>
<text x="494.5" y="834.8" font-size="6.3" fill="#333" text-anchor="start" opacity="0.85" >TB--2</text>
<text x="525" y="834.8" font-size="6.3" fill="#333" text-anchor="start" opacity="0.85" >PL4*1500</text>
<text x="589" y="834.8" font-size="6.3" fill="#333" text-anchor="start" opacity="0.85" >280.0</text>
<text x="625" y="834.8" font-size="6.3" fill="#333" text-anchor="middle" opacity="0.85" >花纹板</text>
<text x="649" y="834.8" font-size="6.3" fill="#333" text-anchor="middle" opacity="0.85" >1</text>
<text x="690" y="834.8" font-size="6.3" fill="#333" text-anchor="end" opacity="0.85" >0.00</text>
<text x="722" y="834.8" font-size="6.3" fill="#333" text-anchor="end" opacity="0.85" >0.00</text>
<text x="757" y="834.8" font-size="6.3" fill="#333" text-anchor="end" opacity="0.85" >0.85</text>
<text x="494.5" y="844.8" font-size="6.3" fill="#333" text-anchor="start" opacity="0.85" >TB--3</text>
<text x="525" y="844.8" font-size="6.3" fill="#333" text-anchor="start" opacity="0.85" >PL4*1500</text>
<text x="589" y="844.8" font-size="6.3" fill="#333" text-anchor="start" opacity="0.85" >165.2</text>
<text x="625" y="844.8" font-size="6.3" fill="#333" text-anchor="middle" opacity="0.85" >花纹板</text>
<text x="649" y="844.8" font-size="6.3" fill="#333" text-anchor="middle" opacity="0.85" >1</text>
<text x="690" y="844.8" font-size="6.3" fill="#333" text-anchor="end" opacity="0.85" >0.00</text>
<text x="722" y="844.8" font-size="6.3" fill="#333" text-anchor="end" opacity="0.85" >0.00</text>
<text x="757" y="844.8" font-size="6.3" fill="#333" text-anchor="end" opacity="0.85" >0.51</text>
<text x="494.5" y="854.8" font-size="6.3" fill="#333" text-anchor="start" opacity="0.85" >TB--4</text>
<text x="525" y="854.8" font-size="6.3" fill="#333" text-anchor="start" opacity="0.85" >PL4*1500</text>
<text x="589" y="854.8" font-size="6.3" fill="#333" text-anchor="start" opacity="0.85" >441.2</text>
<text x="625" y="854.8" font-size="6.3" fill="#333" text-anchor="middle" opacity="0.85" >花纹板</text>
<text x="649" y="854.8" font-size="6.3" fill="#333" text-anchor="middle" opacity="0.85" >13</text>
<text x="690" y="854.8" font-size="6.3" fill="#333" text-anchor="end" opacity="0.85" >0.00</text>
<text x="722" y="854.8" font-size="6.3" fill="#333" text-anchor="end" opacity="0.85" >0.00</text>
<text x="757" y="854.8" font-size="6.3" fill="#333" text-anchor="end" opacity="0.85" >17.41</text>
<text x="666" y="865.3" font-size="5.8" fill="#9fe870" text-anchor="start" opacity="0.8" >合计 (Total):</text>
<text x="722.5" y="865.3" font-size="6.2" fill="#ff9a50" text-anchor="end" opacity="0.85" >406.25</text>
<text x="756.5" y="865.3" font-size="6.2" fill="#333" text-anchor="end" opacity="0.85" >39.21</text>
</g>
<text x="801.7" y="704.8" font-size="4.6" fill="#ff40ff" text-anchor="middle" opacity="0.7" >某某厂</text>
<text x="801.7" y="733.8" font-size="4.6" fill="#ff40ff" text-anchor="middle" opacity="0.7" >2#厂房</text>
<text x="801.7" y="761.8" font-size="4.6" fill="#ff40ff" text-anchor="middle" opacity="0.7" >钢楼梯</text>
<text x="801" y="795" font-size="4.6" fill="#ff40ff" text-anchor="middle" opacity="0.5" >GT--1</text>
<text x="801.6" y="849.5" font-size="4.6" fill="#ff40ff" text-anchor="middle" opacity="0.7" >程</text>
<text x="778.3" y="866.4" font-size="5.8" fill="#333" text-anchor="start" opacity="0.9" >1:25</text>
<text x="770" y="857.2" font-size="3.2" fill="#333" text-anchor="start" opacity="0.85" >DATE</text>
<text x="757.5" y="287" font-size="3.0" fill="#333" text-anchor="start" opacity="0.95" >施工说明</text>
<text x="757.5" y="292" font-size="2.3" fill="#222" text-anchor="start" opacity="0.95" >GENERAL NOTES</text>
<text x="756" y="337.5" font-size="3.0" fill="#333" text-anchor="start" opacity="0.95" >备注</text>
<text x="756" y="341.5" font-size="2.3" fill="#222" text-anchor="start" opacity="0.95" >REMARK</text>
<text x="756.5" y="690" font-size="3.0" fill="#333" text-anchor="start" opacity="0.95" >建设单位</text>
<text x="756.5" y="693.5" font-size="2.3" fill="#222" text-anchor="start" opacity="0.95" >CLIENT</text>
<text x="756.5" y="720" font-size="3.0" fill="#333" text-anchor="start" opacity="0.95" >工程名称</text>
<text x="756.5" y="723.5" font-size="2.3" fill="#222" text-anchor="start" opacity="0.95" >PROJECT NAME</text>
<text x="756.5" y="749" font-size="3.0" fill="#333" text-anchor="start" opacity="0.95" >图纸名称</text>
<text x="756.5" y="752.5" font-size="2.3" fill="#222" text-anchor="start" opacity="0.95" >TITLE</text>
<text x="756.5" y="776.5" font-size="3.0" fill="#333" text-anchor="start" opacity="0.95" >图号</text>
<text x="756.5" y="780" font-size="2.3" fill="#222" text-anchor="start" opacity="0.95" >DRAWING TITLE</text>
<text x="756.5" y="815" font-size="3.0" fill="#333" text-anchor="start" opacity="0.95" >专业负责人</text>
<text x="756.5" y="818.8" font-size="2.3" fill="#222" text-anchor="start" opacity="0.95" >PROJECT ENGINEER</text>
<text x="756.5" y="823" font-size="3.0" fill="#333" text-anchor="start" opacity="0.95" >审核</text>
<text x="756.5" y="826.8" font-size="2.3" fill="#222" text-anchor="start" opacity="0.95" >APPROVED BY</text>
<text x="756.5" y="831" font-size="3.0" fill="#333" text-anchor="start" opacity="0.95" >专业审核</text>
<text x="756.5" y="834.8" font-size="2.3" fill="#222" text-anchor="start" opacity="0.95" >DISCIPLINE APPROVED BY</text>
<text x="756.5" y="839" font-size="3.0" fill="#333" text-anchor="start" opacity="0.95" >校对</text>
<text x="756.5" y="842.8" font-size="2.3" fill="#222" text-anchor="start" opacity="0.95" >CHECKED BY</text>
<text x="756.5" y="847" font-size="3.0" fill="#333" text-anchor="start" opacity="0.95" >设计</text>
<text x="756.5" y="850.8" font-size="2.3" fill="#222" text-anchor="start" opacity="0.95" >DESIGNED BY</text>
<text x="756.5" y="855.4" font-size="3.0" fill="#333" text-anchor="start" opacity="0.95" >日期</text>
<text x="756.5" y="859" font-size="2.3" fill="#222" text-anchor="start" opacity="0.95" >DATE</text>
<text x="756.5" y="863.2" font-size="3.0" fill="#333" text-anchor="start" opacity="0.95" >比例 SCALE</text>
<text x="756.5" y="867" font-size="2.3" fill="#222" text-anchor="start" opacity="0.95" >SCALE</text>
<text x="793" y="855.4" font-size="3.0" fill="#333" text-anchor="start" opacity="0.95" >图号</text>
<text x="793" y="859" font-size="2.3" fill="#222" text-anchor="start" opacity="0.95" >DRAWING No.</text>
<text x="793" y="863.2" font-size="3.0" fill="#333" text-anchor="start" opacity="0.95" >版本号 REVISION</text>
<text x="793" y="867" font-size="2.3" fill="#222" text-anchor="start" opacity="0.95" >ISSUE</text>
</g>
</g>
</svg>
<div class="abs" style="left:371px;top:863px;width:78px;height:21px;background:#ffffe1;border:1px solid #646464"></div>
<div class="t" style="left:374px;top:867px;font-size:12px;line-height:14px;color:#000;word-spacing:1.3px">截图(Alt + A)</div>
<svg id="view3dsvg" style="left:0;top:0" width="1911" height="940" viewBox="0 0 1911 940" fill="none">
<defs><clipPath id="cvR"><rect x="949" y="123" width="926" height="812"/></clipPath></defs><g clip-path="url(#cvR)">
<g stroke="#000" stroke-width="1.1" stroke-dasharray="21 15 5 16">
<path d="M955 460.6L1866 425.2" stroke-dashoffset="24.9"/>
<path d="M1004.2 828.2L1876 792.7"/>
</g>
<path d="M983.7 829.3H990" stroke="#000" stroke-width="1.1"/>
<path d="M949.5 585.4L1019.3 916.3" stroke="#000" stroke-width="0.9" stroke-dasharray="21 8 2.5 8"/>
<path d="M1870.2 123L1872.7 132M1874.2 139.4L1874.5 140.6" stroke="#000" stroke-width="1.2"/>
<polygon points="1151.4,427.9 1593.5,174.2 1598.0,179.0 1610.6,250.7 1616.3,273.9 1175.4,528.3 1169.2,504.2 1156.5,431.9" fill="#bdd270"/>
<polygon points="1151.4,427.9 1593.5,174.2 1596.1,177.8 1154.4,431.3" fill="#a3b65e"/>
<polygon points="1156.5,431.9 1190.9,430.4 1200.7,486.1 1169.2,504.2" fill="#8e9b50"/>
<polygon points="1188.0,413.8 1222.5,412.3 1232.3,468.0 1200.7,486.1" fill="#8e9b50"/>
<polygon points="1219.6,395.7 1254.0,394.2 1263.8,449.9 1232.3,468.0" fill="#8e9b50"/>
<polygon points="1251.1,377.6 1285.5,376.1 1295.3,431.8 1263.8,449.9" fill="#8e9b50"/>
<polygon points="1282.6,359.5 1317.1,358.0 1326.9,413.6 1295.3,431.8" fill="#8e9b50"/>
<polygon points="1314.2,341.3 1348.6,339.8 1358.4,395.5 1326.9,413.6" fill="#8e9b50"/>
<polygon points="1345.7,323.2 1380.1,321.7 1389.9,377.4 1358.4,395.5" fill="#8e9b50"/>
<polygon points="1377.2,305.1 1411.7,303.6 1421.4,359.3 1389.9,377.4" fill="#8e9b50"/>
<polygon points="1408.7,287.0 1443.2,285.5 1453.0,341.2 1421.4,359.3" fill="#8e9b50"/>
<polygon points="1440.3,268.9 1474.7,267.4 1484.5,323.1 1453.0,341.2" fill="#8e9b50"/>
<polygon points="1471.8,250.8 1506.2,249.3 1516.0,305.0 1484.5,323.1" fill="#8e9b50"/>
<polygon points="1503.3,232.7 1537.8,231.2 1547.6,286.9 1516.0,305.0" fill="#8e9b50"/>
<polygon points="1534.9,214.6 1569.3,213.1 1579.1,268.8 1547.6,286.9" fill="#8e9b50"/>
<polygon points="1566.4,196.5 1600.8,195.0 1610.6,250.7 1579.1,268.8" fill="#8e9b50"/>
<path d="M1156.5 431.9L1190.9 430.4" stroke="#6c7838" stroke-width="0.8"/>
<path d="M1188.0 413.8L1222.5 412.3" stroke="#6c7838" stroke-width="0.8"/>
<path d="M1219.6 395.7L1254.0 394.2" stroke="#6c7838" stroke-width="0.8"/>
<path d="M1251.1 377.6L1285.5 376.1" stroke="#6c7838" stroke-width="0.8"/>
<path d="M1282.6 359.5L1317.1 358.0" stroke="#6c7838" stroke-width="0.8"/>
<path d="M1314.2 341.3L1348.6 339.8" stroke="#6c7838" stroke-width="0.8"/>
<path d="M1345.7 323.2L1380.1 321.7" stroke="#6c7838" stroke-width="0.8"/>
<path d="M1377.2 305.1L1411.7 303.6" stroke="#6c7838" stroke-width="0.8"/>
<path d="M1408.7 287.0L1443.2 285.5" stroke="#6c7838" stroke-width="0.8"/>
<path d="M1440.3 268.9L1474.7 267.4" stroke="#6c7838" stroke-width="0.8"/>
<path d="M1471.8 250.8L1506.2 249.3" stroke="#6c7838" stroke-width="0.8"/>
<path d="M1503.3 232.7L1537.8 231.2" stroke="#6c7838" stroke-width="0.8"/>
<path d="M1534.9 214.6L1569.3 213.1" stroke="#6c7838" stroke-width="0.8"/>
<path d="M1566.4 196.5L1600.8 195.0" stroke="#6c7838" stroke-width="0.8"/>
<polygon points="1188.0,413.8 1190.4,413.1 1204.3,484.1 1200.7,486.1" fill="#869a54"/>
<path d="M1188.0 413.8L1200.7 486.1M1190.4 413.1L1204.3 484.1" stroke="#3f4620" stroke-width="1.15"/>
<polygon points="1219.6,395.7 1222.0,395.0 1235.9,466.0 1232.3,468.0" fill="#869a54"/>
<path d="M1219.6 395.7L1232.3 468.0M1222.0 395.0L1235.9 466.0" stroke="#3f4620" stroke-width="1.15"/>
<polygon points="1251.1,377.6 1253.5,376.9 1267.4,447.9 1263.8,449.9" fill="#869a54"/>
<path d="M1251.1 377.6L1263.8 449.9M1253.5 376.9L1267.4 447.9" stroke="#3f4620" stroke-width="1.15"/>
<polygon points="1282.6,359.5 1285.0,358.8 1298.9,429.8 1295.3,431.8" fill="#869a54"/>
<path d="M1282.6 359.5L1295.3 431.8M1285.0 358.8L1298.9 429.8" stroke="#3f4620" stroke-width="1.15"/>
<polygon points="1314.2,341.3 1316.6,340.6 1330.5,411.6 1326.9,413.6" fill="#869a54"/>
<path d="M1314.2 341.3L1326.9 413.6M1316.6 340.6L1330.5 411.6" stroke="#3f4620" stroke-width="1.15"/>
<polygon points="1345.7,323.2 1348.1,322.5 1362.0,393.5 1358.4,395.5" fill="#869a54"/>
<path d="M1345.7 323.2L1358.4 395.5M1348.1 322.5L1362.0 393.5" stroke="#3f4620" stroke-width="1.15"/>
<polygon points="1377.2,305.1 1379.6,304.4 1393.5,375.4 1389.9,377.4" fill="#869a54"/>
<path d="M1377.2 305.1L1389.9 377.4M1379.6 304.4L1393.5 375.4" stroke="#3f4620" stroke-width="1.15"/>
<polygon points="1408.7,287.0 1411.1,286.3 1425.0,357.3 1421.4,359.3" fill="#869a54"/>
<path d="M1408.7 287.0L1421.4 359.3M1411.1 286.3L1425.0 357.3" stroke="#3f4620" stroke-width="1.15"/>
<polygon points="1440.3,268.9 1442.7,268.2 1456.6,339.2 1453.0,341.2" fill="#869a54"/>
<path d="M1440.3 268.9L1453.0 341.2M1442.7 268.2L1456.6 339.2" stroke="#3f4620" stroke-width="1.15"/>
<polygon points="1471.8,250.8 1474.2,250.1 1488.1,321.1 1484.5,323.1" fill="#869a54"/>
<path d="M1471.8 250.8L1484.5 323.1M1474.2 250.1L1488.1 321.1" stroke="#3f4620" stroke-width="1.15"/>
<polygon points="1503.3,232.7 1505.7,232.0 1519.6,303.0 1516.0,305.0" fill="#869a54"/>
<path d="M1503.3 232.7L1516.0 305.0M1505.7 232.0L1519.6 303.0" stroke="#3f4620" stroke-width="1.15"/>
<polygon points="1534.9,214.6 1537.3,213.9 1551.2,284.9 1547.6,286.9" fill="#869a54"/>
<path d="M1534.9 214.6L1547.6 286.9M1537.3 213.9L1551.2 284.9" stroke="#3f4620" stroke-width="1.15"/>
<polygon points="1566.4,196.5 1568.8,195.8 1582.7,266.8 1579.1,268.8" fill="#869a54"/>
<path d="M1566.4 196.5L1579.1 268.8M1568.8 195.8L1582.7 266.8" stroke="#3f4620" stroke-width="1.15"/>
<polygon points="1597.9,178.4 1600.3,177.7 1614.2,248.7 1610.6,250.7" fill="#869a54"/>
<path d="M1597.9 178.4L1610.6 250.7M1600.3 177.7L1614.2 248.7" stroke="#3f4620" stroke-width="1.15"/>
<path d="M1156.5 431.9L1172.5 502.3" stroke="#3f4620" stroke-width="0.9"/>
<polygon points="1169.2,504.2 1610.6,250.7 1611.6,254.9 1170.2,508.4" fill="#a3b65e"/>
<path d="M1169.2 504.2L1610.6 250.7" stroke="#6c7838" stroke-width="0.8"/>
<polygon points="1175.4,528.3 1616.3,273.9 1615.7,270.3 1174.8,524.7" fill="#a3b65e"/>
<polygon points="1593.5,174.2 1722.7,169.0 1723.8,175.4 1597.6,180.2" fill="#a3b65e"/>
<polygon points="1593.5,174.2 1722.7,169.0 1722.9,171.0 1594.6,176.2" fill="#bdd270"/>
<polygon points="1597.3,178.9 1723.4,174.2 1737.7,246.5 1613.5,250.7" fill="#8e9b50"/>
<path d="M1599 179.3L1723.4 174.6" stroke="#59642e" stroke-width="1" stroke-dasharray="13 6"/>
<path d="M1723.4 174.2L1737.7 246.5" stroke="#6c7838" stroke-width="0.9"/>
<polygon points="1610.6,250.9 1737.7,246.5 1738.9,248.6 1738.9,260.6 1721.3,260.6 1721.3,271.1 1616.3,273.9" fill="#bdd270"/>
<polygon points="1610.6,250.0 1737.7,245.6 1738.9,248.8 1611.3,253.4" fill="#a3b65e"/>
<path d="M1614 250.8L1737.7 246.7" stroke="#59642e" stroke-width="1" stroke-dasharray="13 6"/>
<polygon points="1616.3,273.9 1721.3,271.1 1721.3,269.2 1615.8,272.0" fill="#a3b65e"/>
<path d="M1610.6 251L1616.3 273.9" stroke="#8a9c4c" stroke-width="0.7"/>
<polygon points="976.5,434.6 1151.4,427.9 1157.0,432.8 977.5,439.4" fill="#a3b65e"/>
<polygon points="959.2,443.5 978.2,442.7 977.3,438.2 1156.5,431.6 1172.5,502.3 1169.7,504.6 973.9,511.7" fill="#8e9b50"/>
<polygon points="959.2,443.5 978.2,442.7 978.4,444.0 959.6,444.9" fill="#98a656"/>
<polygon points="973.9,511.7 1169.7,504.6 1175.4,528.3 974.2,536.8" fill="#bdd270"/>
<polygon points="973.9,510.8 1169.7,503.8 1170.4,507.6 974.0,514.8" fill="#a3b65e"/>
<path d="M975 511.7L1169.7 504.8" stroke="#59642e" stroke-width="1" stroke-dasharray="13 6"/>
<polygon points="974.2,536.8 1175.4,528.3 1175.0,526.2 974.2,534.4" fill="#a3b65e"/>
<path d="M1169.7 504.6L1175.4 528.3" stroke="#8a9c4c" stroke-width="0.7"/>
<path d="M979.9 516.4L982.8 519.2L979.9 522L977 519.2ZM979.9 524.1L982.8 526.9L979.9 529.7L977 526.9Z" fill="#d46a0a"/>
<circle cx="1267" cy="466.5" r="0.6" fill="#333"/><circle cx="1204.5" cy="503" r="0.6" fill="#333"/>
<g stroke="#ff00ff" stroke-width="1.1">
<circle cx="1445.4" cy="372.4" r="39" stroke-dasharray="6 6.25"/>
<path d="M1421.2 392.5L1412.4 401.2"/>
<path d="M1425.3 396.6L1416.6 405.4"/>
<path d="M1419.5 402.4l2.4 2.4"/>
<path d="M1465.5 396.6L1474.2 405.4"/>
<path d="M1469.6 392.5L1478.4 401.2"/>
<path d="M1475.4 398.3l2.4 -2.4"/>
<path d="M1425.3 348.2L1416.6 339.4"/>
<path d="M1421.2 352.3L1412.4 343.6"/>
<path d="M1415.4 346.5l-2.4 2.4"/>
<path d="M1469.6 352.3L1478.4 343.6"/>
<path d="M1465.5 348.2L1474.2 339.4"/>
<path d="M1471.3 342.4l-2.4 -2.4"/>
<path d="M1444.4 371.5L1446 373"/>
</g>
<g font-family="Liberation Sans,sans-serif" fill="#000" font-size="14.5">
<text x="954.6" y="460" textLength="14.5" lengthAdjust="spacingAndGlyphs" font-weight="bold">21</text>
<text x="1855" y="423.6" textLength="15" lengthAdjust="spacingAndGlyphs">21</text>
<text x="955.5" y="829" textLength="16.5" lengthAdjust="spacingAndGlyphs">22</text>
<text x="1853.5" y="792.3" textLength="16.5" lengthAdjust="spacingAndGlyphs">22</text>
<text x="954.2" y="583.6" stroke="#000" stroke-width="0.35">A</text>
<text x="1007.4" y="923" stroke="#000" stroke-width="0.35">A</text>
<text x="1858.8" y="141.6" font-size="16" font-weight="bold" textLength="8" lengthAdjust="spacingAndGlyphs" stroke="#000" stroke-width="0.5">B</text>
<text x="1862.6" y="141.6" font-size="16" font-weight="bold" textLength="8.4" lengthAdjust="spacingAndGlyphs" stroke="#000" stroke-width="0.5">B</text>
</g>
<path d="M1853 425.5H1869M1853 794.3H1870M949 830.4H968" stroke="#000" stroke-width="1"/>
<defs><linearGradient id="shv" x1="0" x2="1" y1="0" y2="0"><stop offset="0" stop-color="#8c8c92"/><stop offset="0.45" stop-color="#c8c8cc"/><stop offset="1" stop-color="#77777d"/></linearGradient><linearGradient id="shh" x1="0" x2="0" y1="0" y2="1"><stop offset="0" stop-color="#8a8a8e"/><stop offset="0.4" stop-color="#d8d6da"/><stop offset="1" stop-color="#b4b2b8"/></linearGradient></defs>
<rect x="1816.1" y="881" width="6.5" height="32" fill="url(#shv)"/>
<rect x="1821" y="901.6" width="28" height="4.8" fill="url(#shh)"/>
<rect x="1816.1" y="905" width="7.5" height="8" fill="#8a8a90"/>
<path d="M1819.2 866.6L1826.4 880.6Q1819.2 884.6 1811.8 880.6Z" fill="#0000c8"/>
<path d="M1848 897.6L1862.2 903.6L1848 907.2Z" fill="#12a012"/>
<path d="M1815 916L1818 912.4L1826 912L1829.2 916.6L1823 923.8L1818.4 921.4Z" fill="#b40000"/>
<path d="M1824 864.4H1834.6L1824.6 874.4H1834.2" stroke="#0000e0" stroke-width="1"/>
<path d="M1854 889.2L1858 894.4L1862 889.2M1858 894.4V899" stroke="#00d000" stroke-width="1"/>
<path d="M1827.4 903.2L1836.8 912.8M1836.8 903.2L1827.4 912.8" stroke="#e00000" stroke-width="1"/>
</g></svg>
<!-- plugin dialog -->
<div class="abs" id="dlg" style="left:1320px;top:507px;width:484px;height:341px;background:#fff;border-radius:8px;box-shadow:0 0 0 1px rgba(110,110,125,.45),0 12px 28px 2px rgba(50,50,70,.32),0 2px 6px rgba(50,50,70,.2);overflow:hidden">
  <div class="abs" style="left:0;top:0;width:484px;height:30px;background:#f3f3f3"></div>
  <svg style="left:8px;top:6px" width="16" height="16" viewBox="0 0 16 16"><rect width="16" height="16" fill="#fff"/><path d="M3 5.5C4 3 8 2.4 10.4 3.4M2.6 6.4H7V9.4H10" stroke="#1c6fc4" stroke-width="1.3" fill="none"/><rect x="9.4" y="6" width="4" height="4.6" fill="#163a7a"/><path d="M4 8.6L5.4 10.4M7 3H10" stroke="#38a0e0" stroke-width="1.2"/><path d="M5 12.6H11" stroke="#6aa0d8" stroke-width="1"/></svg>
  <div class="t" style="left:30px;top:8px;font-size:12px;line-height:13px;color:#8e8e8e">坐标标注</div>
  <svg style="left:350px;top:0" width="135" height="30" viewBox="0 0 135 30" fill="none" stroke="#8a8a8a" stroke-width="1"><path d="M15.5 14.5H25"/><rect x="60.5" y="9.5" width="9.5" height="9.5" rx="1"/><path d="M106 9.5L116 19.5M116 9.5L106 19.5"/></svg>
  <div class="abs cb" style="left:21px;top:51px"></div>
  <div class="abs cb" style="left:21px;top:90px"></div>
  <div class="abs cb" style="left:21px;top:130px"></div>
  <svg style="left:21px;top:51px" width="13" height="13" viewBox="0 0 13 13"><path d="M2.6 6.4L5.2 9.6L10.4 2.8" stroke="#1a1a1a" stroke-width="1.7" fill="none"/></svg>
  <svg style="left:21px;top:90px" width="13" height="13" viewBox="0 0 13 13"><path d="M2.6 6.4L5.2 9.6L10.4 2.8" stroke="#1a1a1a" stroke-width="1.7" fill="none"/></svg>
  <div class="t dl" style="left:40px;top:51px">绝对坐标</div>
  <div class="t dl" style="left:40px;top:91px">图纸坐标</div>
  <div class="t dl" style="left:40px;top:130px">原点坐标</div>
  <div class="abs" style="left:383px;top:164px;width:86px;height:41px;background:#0000ff;border:1px solid #3c3c46"></div>
  <div class="t" style="left:394px;top:175px;font-size:16px;line-height:18px;color:#fff">标注坐标</div>
</div>
<style>.cb{width:14px;height:13px;border:1px solid #333;background:#fff}.dl{font-size:16px;line-height:18px;color:#000}</style>
<!-- red annotation -->
<div class="abs" style="left:1667px;top:647px;width:160px;height:89px;border:2px solid #ff2418;border-radius:3px"></div>
<div class="t" style="left:1405px;top:761px;font-size:21px;line-height:27.4px;color:#ff2a1c;white-space:pre">此时打开我们的插件
点击坐标标注</div>
<div class="abs" style="left:0;top:943.2px;width:1911px;height:2.8px;background:#fbfbfd"></div>
<div class="abs" style="left:0;top:946px;width:1911px;height:1px;background:#dddce3"></div>
<div class="abs" style="left:0;top:947px;width:3px;height:29px;background:#e2e1e8"></div>
<div class="abs" style="left:3px;top:948px;width:355px;height:29px;background:#f5f4f9;border:1px solid #e8e7ed"></div>
<div class="abs" style="left:360px;top:947px;width:298px;height:26px;background:#f5f4f9;border:1px solid #e8e7ed"></div>
<div class="abs" style="left:360px;top:947px;width:5px;height:26px;background:#e4e3ea"></div>
<div class="abs" style="left:5.0px;top:952px;width:20px;height:20px;background:#d0d0d6"></div>
<div class="abs" style="left:27.0px;top:952px;width:20px;height:20px;background:#d0d0d6"></div>
<div class="abs" style="left:49.1px;top:952px;width:20px;height:20px;background:#d0d0d6"></div>
<div class="abs" style="left:71.1px;top:952px;width:20px;height:20px;background:#d0d0d6"></div>
<div class="abs" style="left:93.1px;top:952px;width:20px;height:20px;background:#d0d0d6"></div>
<div class="abs" style="left:115.2px;top:952px;width:20px;height:20px;background:#d0d0d6"></div>
<div class="abs" style="left:137.2px;top:952px;width:20px;height:20px;background:#d0d0d6"></div>
<div class="abs" style="left:159.2px;top:952px;width:20px;height:20px;background:#d0d0d6"></div>
<div class="abs" style="left:181.2px;top:952px;width:20px;height:20px;background:#d0d0d6"></div>
<div class="abs" style="left:225.3px;top:952px;width:20px;height:20px;background:#d0d0d6"></div>
<div class="abs" style="left:269.4px;top:952px;width:20px;height:20px;background:#d0d0d6"></div>
<div class="abs" style="left:291.4px;top:952px;width:20px;height:20px;background:#d0d0d6"></div>
<div class="abs" style="left:367px;top:950px;width:20px;height:20px;background:#d0d0d6"></div>
<div class="abs" style="left:389px;top:950px;width:20px;height:20px;background:#d0d0d6"></div>
<div class="abs" style="left:433px;top:950px;width:20px;height:20px;background:#d0d0d6"></div>
<div class="abs" style="left:455px;top:950px;width:20px;height:20px;background:#d0d0d6"></div>
<div class="abs" style="left:477px;top:950px;width:20px;height:20px;background:#d0d0d6"></div>
<div class="abs" style="left:499px;top:950px;width:20px;height:20px;background:#d0d0d6"></div>
<div class="abs" style="left:521px;top:950px;width:20px;height:20px;background:#d0d0d6"></div>
<div class="abs" style="left:569px;top:950px;width:20px;height:20px;background:#d0d0d6"></div>
<div class="abs" style="left:591px;top:950px;width:20px;height:20px;background:#d0d0d6"></div>
<div class="abs" style="left:565px;top:950px;width:1px;height:20px;background:#dcdbe2"></div>
<svg style="left:0;top:940px" width="700" height="54" viewBox="0 940 700 54" fill="none">
<path d="M11 955.4V968.2L14 965.6L16.2 970L18.6 968.8L16.4 964.6L20.4 964Z" fill="#34333f"/>
<path d="M31.6 967.6L42.6 956.4" stroke="#34333f" stroke-width="1.3"/>
<text x="53.2" y="968.4" font-family="Liberation Serif,serif" font-weight="bold" font-size="17.5" fill="#34333f">T</text>
<path d="M75.4 964.8C78.6 964.6 79 961 82 961H87" stroke="#34333f" stroke-width="1.8"/>
<rect x="97.2" y="956" width="12" height="12" fill="#1e88cc"/>
<rect x="119.8" y="956.6" width="10.8" height="10.8" stroke="#34333f" stroke-width="1.5"/><rect x="123.4" y="960.2" width="3.6" height="3.6" fill="#34333f"/>
<path d="M141.6 966.6L148.4 959.8" stroke="#34333f" stroke-width="1.2" stroke-dasharray="1.4 1.2"/><path d="M147 961L150.6 957L153 961.6L150 961Z" fill="#34333f"/><path d="M141.4 961.4L143 963M145 965.4L146.6 967" stroke="#34333f" stroke-width="0.9"/>
<rect x="163.6" y="957.4" width="11" height="9" stroke="#34333f" stroke-width="1.3"/><path d="M163.6 958.6H174.6" stroke="#34333f" stroke-width="2"/>
<path d="M185.4 961.8H196.4" stroke="#34333f" stroke-width="1.1"/><path d="M187.4 958.4V966M190.8 958V966.4M194 958.4V966" stroke="#34333f" stroke-width="1.3"/>
<path d="M208 958V966M218.4 958V966M208 962H218.4" stroke="#34333f" stroke-width="1.3"/>
<path d="M229 959.4H240M229 962.6H240M231.4 957V966M235 957V966M238.4 957V966" stroke="#34333f" stroke-width="1.2"/><path d="M230 967.6H240M241.2 958V966" stroke="#34333f" stroke-width="0.8" stroke-dasharray="1 1.2"/>
<path d="M251 959.4H261M251 962.6H261M253.4 957V966M257 957V966" stroke="#5a5a66" stroke-width="1"/><path d="M259.6 956.6V967" stroke="#f08a1c" stroke-width="1.3"/><path d="M252 967.6H261M262.8 958V966" stroke="#34333f" stroke-width="0.8" stroke-dasharray="1 1.2"/>
<circle cx="281.6" cy="960" r="3.6" stroke="#34333f" stroke-width="1.3"/><circle cx="281.6" cy="960" r="0.9" fill="#34333f"/><path d="M279 962.6C277.6 966.4 276.4 966.6 273.4 966.6" stroke="#34333f" stroke-width="1.3"/>
<path d="M298.4 956.2V960M303 956.2V960" stroke="#34333f" stroke-width="1.5"/><path d="M297 959.6H304.6V963.4L303.2 965.2H298.4L297 963.4Z" fill="#34333f"/><rect x="299.4" y="965" width="2.8" height="2.2" fill="#34333f"/>
<defs><pattern id="hx" width="2.2" height="2.2" patternUnits="userSpaceOnUse" patternTransform="rotate(45)"><rect width="2.2" height="2.2" fill="#f5f4f9"/><path d="M0 0H2.2M0 0V2.2" stroke="#34333f" stroke-width="0.9"/></pattern></defs><circle cx="323.2" cy="962" r="6" fill="url(#hx)"/>
<path d="M338.6 961.4C341.6 956.6 348.6 956.6 351.6 961.4C348.6 966.2 341.6 966.2 338.6 961.4Z" fill="#34333f"/><circle cx="345.1" cy="961.4" r="2.8" fill="#f5f4f9"/><circle cx="345.1" cy="961.4" r="1.5" fill="#34333f"/>
<rect x="371.4" y="954.4" width="11.2" height="11.2" stroke="#34333f" stroke-width="1.3"/><path d="M371.4 954.4L382.6 965.6M382.6 954.4L371.4 965.6" stroke="#34333f" stroke-width="1.2"/>
<rect x="393.4" y="954.4" width="11.2" height="11.2" stroke="#34333f" stroke-width="1.3"/>
<circle cx="421.2" cy="960.1" r="5.6" stroke="#34333f" stroke-width="1.2"/>
<path d="M443 955.4L448 964H438Z" stroke="#34333f" stroke-width="1.2"/>
<path d="M459.6 954.6L470.4 965.4M470.4 954.6L459.6 965.4" stroke="#34333f" stroke-width="1.2"/>
<path d="M481.4 965.4H492.4V954.4" stroke="#34333f" stroke-width="1.3"/><rect x="488" y="961" width="4.4" height="4.4" stroke="#34333f" stroke-width="1"/>
<path d="M505.4 954.6H512.8L505.4 965.4H512.8Z" stroke="#34333f" stroke-width="1.2"/>
<path d="M530.8 954.6H537.4L530.8 965.4H537.4Z" stroke="#34333f" stroke-width="1.1"/><path d="M525 959.6H530" stroke="#34333f" stroke-width="0.9" stroke-dasharray="1 0.8"/><path d="M530 958L532.4 959.6L530 961.2Z" fill="#34333f"/>
<path d="M547.6 961.8L553.2 957.6L558.8 961.8" stroke="#34333f" stroke-width="1.3"/>
<rect x="573" y="954" width="12" height="12" fill="#56556a"/><rect x="576.8" y="957.8" width="4.4" height="4.4" fill="#ff8c14"/>
<rect x="596.6" y="955.6" width="9" height="9" fill="#56556a"/><g fill="#ff8c14"><rect x="594.8" y="953.8" width="3" height="3"/><rect x="604.2" y="953.8" width="3" height="3"/><rect x="594.8" y="963.2" width="3" height="3"/><rect x="604.2" y="963.2" width="3" height="3"/></g>
<path d="M619 956.4V965M626.4 956.4V963.6M619 958.4H626.4" stroke="#34333f" stroke-width="1.3"/><circle cx="626.4" cy="956.8" r="1.7" fill="#34333f"/><rect x="617.6" y="959.4" width="2.8" height="3.6" fill="#34333f"/>
<path d="M638.6 959.6C641.6 954.8 648.6 954.8 651.6 959.6C648.6 964.4 641.6 964.4 638.6 959.6Z" fill="#34333f"/><circle cx="645.1" cy="959.6" r="2.8" fill="#f5f4f9"/><circle cx="645.1" cy="959.6" r="1.5" fill="#34333f"/>
</svg>
<div class="t" style="left:1388.5px;top:981px;font-size:11px;line-height:13px;color:#1a1a22">d</div>
<div class="t" style="left:1446px;top:981px;font-size:11px;line-height:13px;color:#1a1a22">0</div>
<div class="t" style="left:1475.5px;top:981px;font-size:11px;line-height:13px;color:#1a1a22">Pan</div>
<div class="t" style="left:1526px;top:981px;font-size:12px;line-height:13px;color:#1a1a22">目前的状态 <span style="font-size:11px">1, </span>状态 <span style="font-size:11px">1</span></div>
<div class="t" style="left:1753.5px;top:981px;font-size:12px;line-height:13px;color:#1a1a22"><span style="font-size:11px">0 + 0 </span>选择的物体</div>
</body>
</html>
